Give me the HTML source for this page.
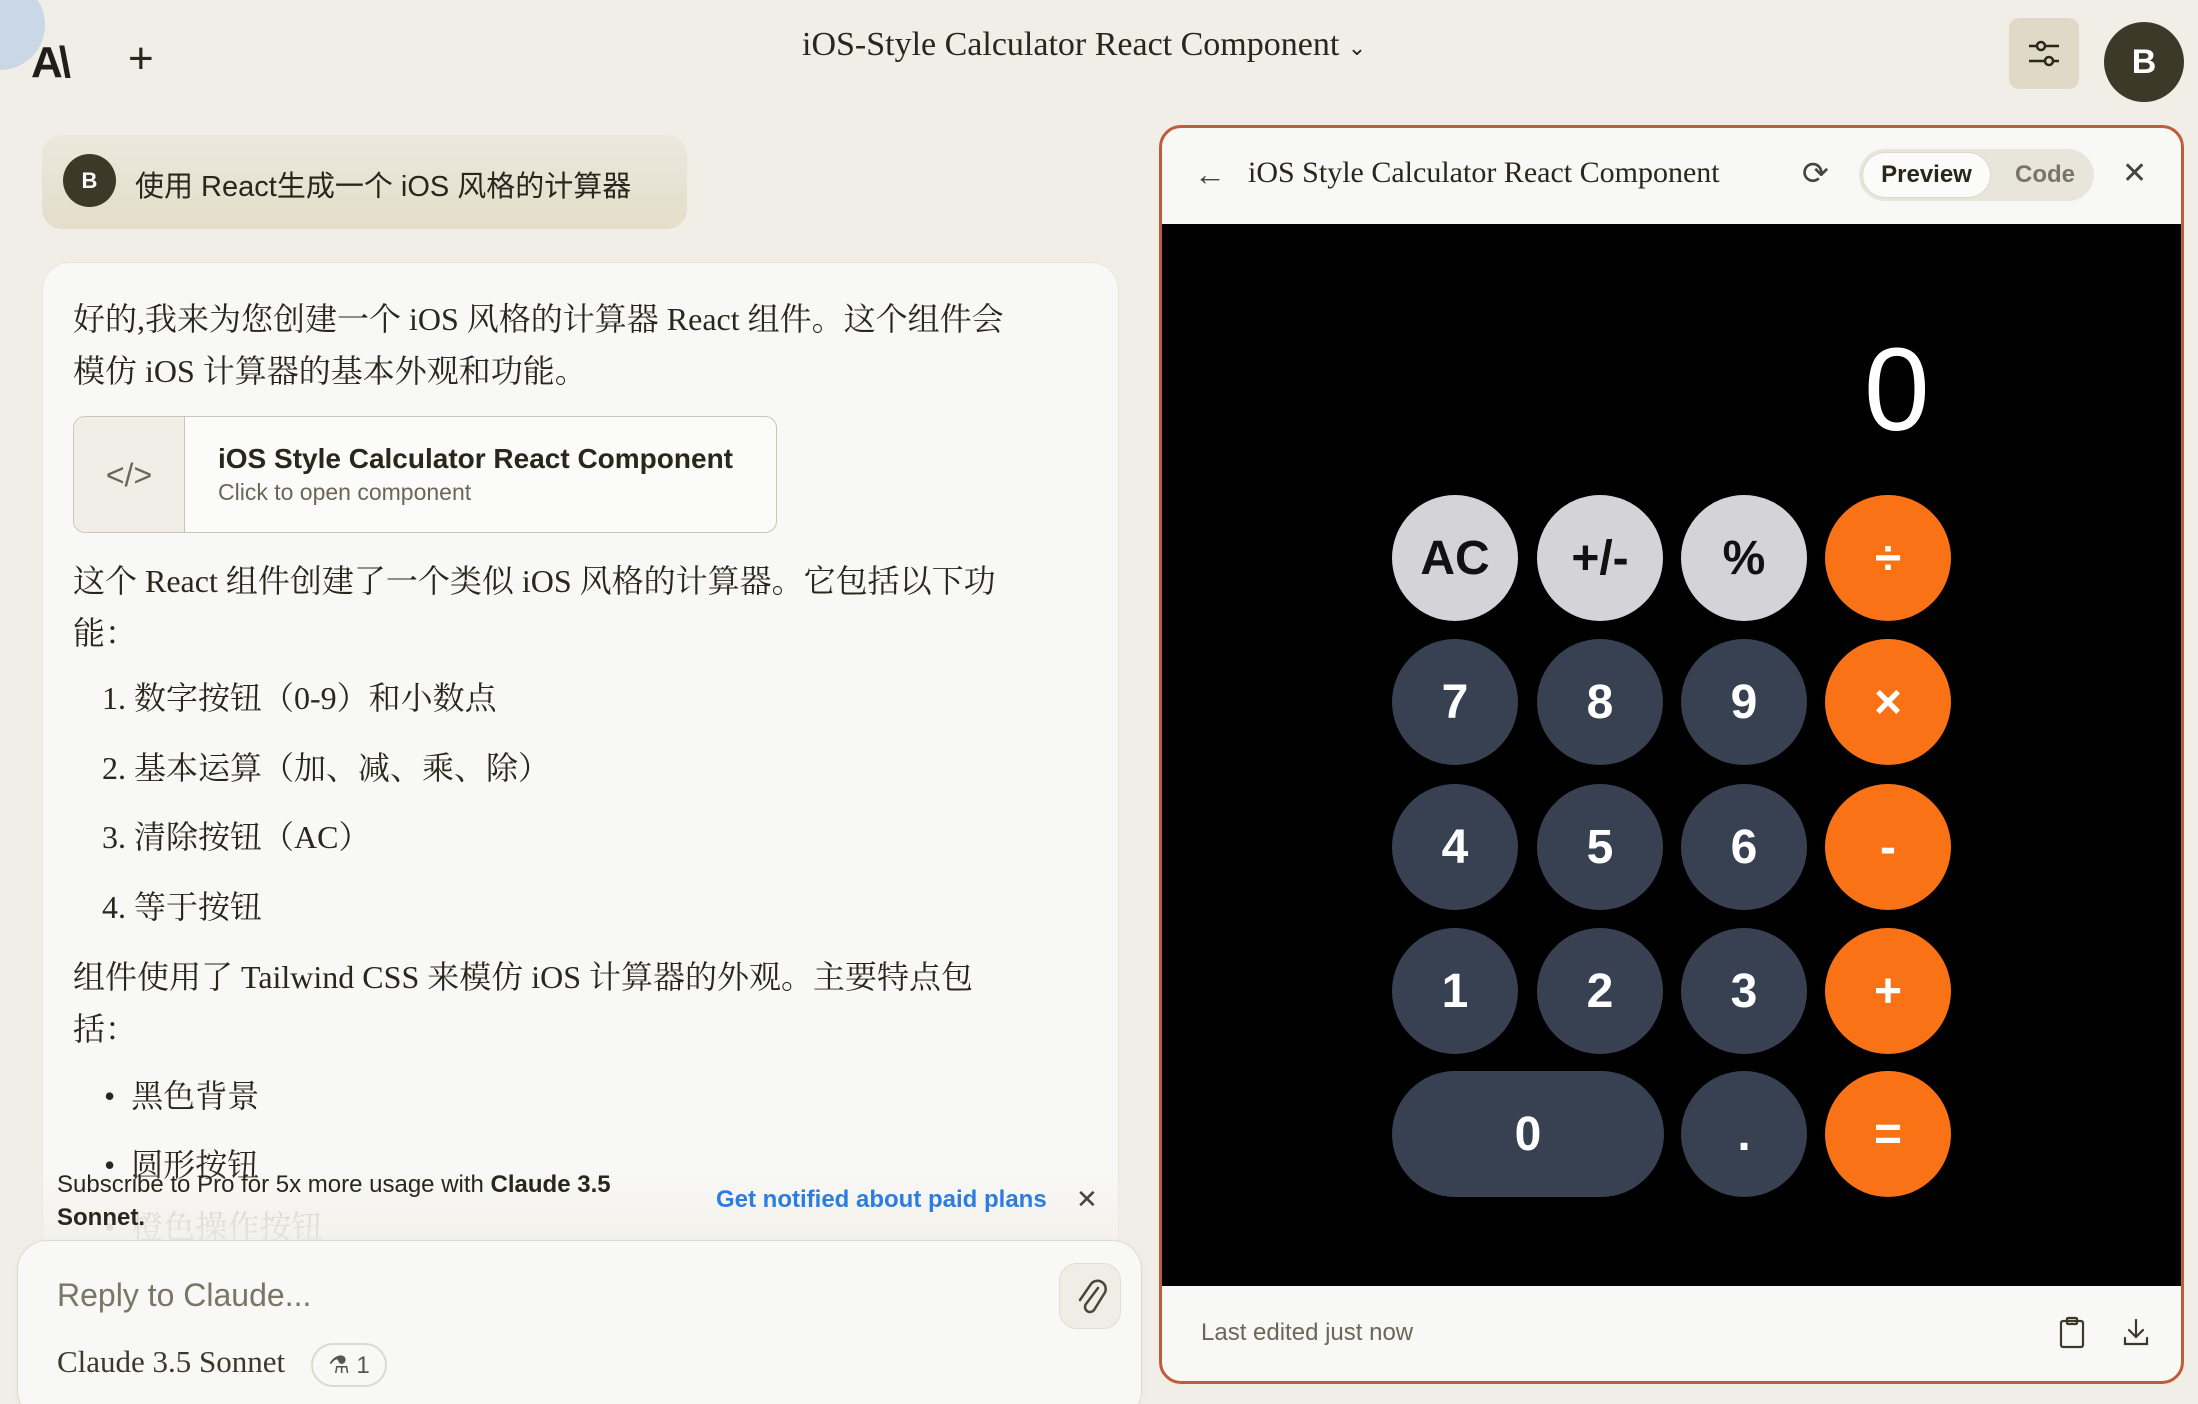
<!DOCTYPE html>
<html style="width:2198px;height:1404px;overflow:hidden"><head><meta charset="utf-8"><style>
*{margin:0;padding:0;box-sizing:border-box}
body{width:2198px;height:1404px;background:#f0eee6;position:relative;overflow:hidden;font-family:"Liberation Sans","Noto Sans CJK SC",sans-serif;color:#29261b}
.a{position:absolute}
.serif{font-family:"Liberation Serif","Noto Serif CJK SC",serif}
.btn{position:absolute;width:126px;height:126px;border-radius:63px;display:flex;align-items:center;justify-content:center;font-weight:bold;font-size:48px;color:#fff}
.g{background:#d4d4d8;color:#111}
.d{background:#374151}
.o{background:#f97316}
.p{font-size:32px;line-height:52px}
</style></head><body>
<div class="a" style="left:-45px;top:-20px;width:90px;height:90px;border-radius:45px;background:#c9d7e6"></div>
<div class="a" style="left:31px;top:38px;font-size:44px;font-weight:bold;letter-spacing:-4px;color:#1f1e1a">A\</div>
<div class="a" style="left:128px;top:34px;font-size:44px;color:#29261b">+</div>
<div class="a serif" style="left:802px;top:26px;font-size:34px;color:#29261b">iOS-Style Calculator React Component <span style="font-size:22px">&#8964;</span></div>
<div class="a" style="left:2009px;top:18px;width:70px;height:71px;border-radius:10px;background:#e0d9c7">
<svg width="70" height="71" viewBox="0 0 70 71"><g stroke="#29261b" stroke-width="2.5" fill="none"><line x1="20" y1="28" x2="50" y2="28"/><line x1="20" y1="43" x2="50" y2="43"/><circle cx="32" cy="28" r="4" fill="#e0d9c7"/><circle cx="40" cy="43" r="4" fill="#e0d9c7"/></g></svg></div>
<div class="a" style="left:2104px;top:22px;width:80px;height:80px;border-radius:40px;background:#3d3929;color:#fff;font-weight:bold;font-size:34px;display:flex;align-items:center;justify-content:center">B</div>

<div class="a" style="left:42px;top:135px;width:645px;height:94px;border-radius:20px;background:linear-gradient(#ece8dc,#e4ddca)"></div>
<div class="a" style="left:63px;top:154px;width:53px;height:53px;border-radius:27px;background:#3d3929;color:#fff;font-weight:bold;font-size:22px;display:flex;align-items:center;justify-content:center">B</div>
<div class="a" style="left:135px;top:163px;font-size:29px;color:#29261b">使用 React生成一个 iOS 风格的计算器</div>

<div class="a" style="left:42px;top:262px;width:1077px;height:1142px;border-radius:28px 28px 0 0;background:#f8f8f6;border:1px solid #e8e6df"></div>
<div class="a serif p" style="left:73px;top:293px;width:1000px">好的,我来为您创建一个 iOS 风格的计算器 React 组件。这个组件会<br>模仿 iOS 计算器的基本外观和功能。</div>
<div class="a" style="left:73px;top:416px;width:704px;height:117px;border:1px solid #c9c5b8;border-radius:12px;background:#fbfbf9;overflow:hidden">
<div class="a" style="left:0;top:0;width:111px;height:117px;background:#f0eee6;border-right:1px solid #c9c5b8;display:flex;align-items:center;justify-content:center;font-size:32px;color:#6b6658">&lt;/&gt;</div>
<div class="a" style="left:144px;top:26px;font-size:28px;font-weight:bold;color:#29261b">iOS Style Calculator React Component</div>
<div class="a" style="left:144px;top:62px;font-size:23px;color:#6b6658">Click to open component</div></div>
<div class="a serif p" style="left:73px;top:555px;width:1000px">这个 React 组件创建了一个类似 iOS 风格的计算器。它包括以下功<br>能：</div>
<div class="a serif p" style="left:102px;top:672px">1. 数字按钮（0-9）和小数点</div>
<div class="a serif p" style="left:102px;top:742px">2. 基本运算（加、减、乘、除）</div>
<div class="a serif p" style="left:102px;top:811px">3. 清除按钮（AC）</div>
<div class="a serif p" style="left:102px;top:881px">4. 等于按钮</div>
<div class="a serif p" style="left:73px;top:951px;width:1000px">组件使用了 Tailwind CSS 来模仿 iOS 计算器的外观。主要特点包<br>括：</div>
<div class="a serif p" style="left:104px;top:1070px">•&nbsp; 黑色背景</div>
<div class="a serif p" style="left:104px;top:1139px">•&nbsp; 圆形按钮</div>
<div class="a serif p" style="left:104px;top:1201px;color:#ccc">•&nbsp; 橙色操作按钮</div>
<div class="a" style="left:20px;top:1170px;width:1100px;height:70px;background:linear-gradient(rgba(240,238,230,0),rgba(240,238,230,.7))"></div>
<div class="a" style="left:57px;top:1168px;font-size:24px;line-height:33px;color:#29261b">Subscribe to Pro for 5x more usage with <b>Claude 3.5</b><br><b>Sonnet.</b></div>
<div class="a" style="left:716px;top:1186px;font-size:24px;font-weight:bold;color:#2b7de0">Get notified about paid plans</div>
<div class="a" style="left:1076px;top:1184px;font-size:26px;color:#444">✕</div>

<div class="a" style="left:17px;top:1240px;width:1125px;height:180px;border-radius:30px;background:#f8f8f6;border:1px solid #dedbd2;box-shadow:0 2px 8px rgba(0,0,0,.04)"></div>
<div class="a" style="left:57px;top:1277px;font-size:32px;color:#7a7566">Reply to Claude...</div>
<div class="a" style="left:1059px;top:1263px;width:62px;height:66px;border-radius:18px;background:#efede6;border:1px solid #e0ddd4"><svg width="62" height="66" viewBox="0 0 62 66"><path d="M38 24 L26 40 a5 5 0 0 0 8 6 L44 30 a8 8 0 0 0 -13 -10 L20 36" stroke="#4a4639" stroke-width="2.5" fill="none" stroke-linecap="round"/></svg></div>
<div class="a serif" style="left:57px;top:1344px;font-size:31px;color:#3d3929">Claude 3.5 Sonnet</div>
<div class="a" style="left:311px;top:1343px;width:76px;height:44px;border-radius:22px;border:2px solid #dcd9cf;font-size:24px;color:#555;display:flex;align-items:center;justify-content:center">⚗ 1</div>

<div class="a" style="left:1159px;top:125px;width:1025px;height:1259px;border:3px solid #bd5d3a;border-radius:22px;background:#f8f8f6;overflow:hidden">
<div class="a" style="left:0;top:96px;width:1025px;height:1062px;background:#000"></div>
</div>
<div class="a" style="left:1194px;top:156px;font-size:32px;color:#444">←</div>
<div class="a serif" style="left:1248px;top:156px;font-size:30px;color:#29261b">iOS Style Calculator React Component</div>
<div class="a" style="left:1802px;top:154px;font-size:32px;color:#444">⟳</div>
<div class="a" style="left:1859px;top:149px;width:235px;height:52px;border-radius:26px;background:#e8e5da"></div>
<div class="a" style="left:1862px;top:152px;width:129px;height:46px;border-radius:23px;background:#fbfbf9;border:1px solid #ddd9cc;display:flex;align-items:center;justify-content:center;font-size:24px;font-weight:bold;color:#29261b">Preview</div>
<div class="a" style="left:2015px;top:161px;font-size:24px;font-weight:bold;color:#7a7566">Code</div>
<div class="a" style="left:2122px;top:156px;font-size:30px;color:#444">✕</div>

<div class="a" style="left:1864px;top:325px;font-size:118px;font-weight:300;color:#fff;line-height:130px">0</div>
<div class="btn g" style="left:1392px;top:495px">AC</div>
<div class="btn g" style="left:1537px;top:495px">+/-</div>
<div class="btn g" style="left:1681px;top:495px">%</div>
<div class="btn o" style="left:1825px;top:495px">÷</div>
<div class="btn d" style="left:1392px;top:639px">7</div>
<div class="btn d" style="left:1537px;top:639px">8</div>
<div class="btn d" style="left:1681px;top:639px">9</div>
<div class="btn o" style="left:1825px;top:639px">×</div>
<div class="btn d" style="left:1392px;top:784px">4</div>
<div class="btn d" style="left:1537px;top:784px">5</div>
<div class="btn d" style="left:1681px;top:784px">6</div>
<div class="btn o" style="left:1825px;top:784px">-</div>
<div class="btn d" style="left:1392px;top:928px">1</div>
<div class="btn d" style="left:1537px;top:928px">2</div>
<div class="btn d" style="left:1681px;top:928px">3</div>
<div class="btn o" style="left:1825px;top:928px">+</div>
<div class="btn d" style="left:1392px;top:1071px;width:272px">0</div>
<div class="btn d" style="left:1681px;top:1071px">.</div>
<div class="btn o" style="left:1825px;top:1071px">=</div>

<div class="a" style="left:1201px;top:1319px;font-size:24px;color:#6b6658">Last edited just now</div>
<svg class="a" style="left:2057px;top:1316px" width="30" height="34" viewBox="0 0 30 34"><g stroke="#3d3929" stroke-width="2.2" fill="none"><rect x="4" y="5" width="22" height="26" rx="2"/><rect x="10" y="2" width="10" height="6" rx="1"/></g></svg>
<svg class="a" style="left:2120px;top:1316px" width="32" height="32" viewBox="0 0 32 32"><g stroke="#3d3929" stroke-width="2.2" fill="none" stroke-linecap="round"><path d="M16 4v16M9 14l7 7 7-7M5 22v6h22v-6"/></g></svg>
</body></html>
